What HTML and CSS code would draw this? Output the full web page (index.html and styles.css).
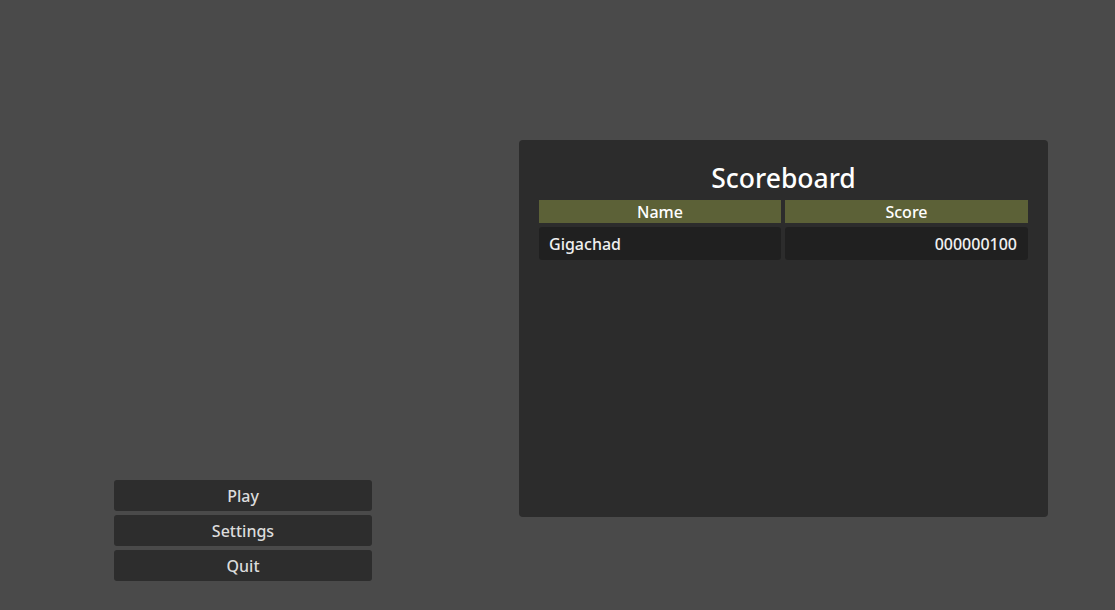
FILE: index.html
```html
<!DOCTYPE html>
<html>
<head>
<meta charset="utf-8">
<link rel="stylesheet" href="styles.css">
</head>
<body>
<div class="screen">
  <div class="menu">
    <div class="btn">Play</div>
    <div class="btn">Settings</div>
    <div class="btn">Quit</div>
  </div>
  <div class="panel">
    <div class="title">Scoreboard</div>
    <div class="table">
      <div class="head">Name</div>
      <div class="head">Score</div>
      <div class="cell name">Gigachad</div>
      <div class="cell score">000000100</div>
    </div>
  </div>
</div>
</body>
</html>
```
FILE: styles.css
```css
html, body {
  margin: 0;
  padding: 0;
  background: #4a4a4a;
}
.screen {
  width: 1115px;
  height: 610px;
  display: flex;
  align-items: flex-start;
  font-family: "Noto Sans", "Open Sans", sans-serif;
  font-weight: 500;
  font-size: 16px;
  color: #f0f0f0;
  overflow: hidden;
}
.menu {
  margin-left: 114px;
  margin-top: 480px;
  width: 258px;
  display: flex;
  flex-direction: column;
  gap: 4px;
}
.btn {
  box-sizing: border-box;
  height: 31px;
  padding-top: 2px;
  line-height: 29px;
  text-align: center;
  background: #2d2d2d;
  border-radius: 3px;
  color: #dcdcdc;
}
.panel {
  margin-left: 147px;
  margin-top: 140px;
  width: 489px;
  height: 359px;
  padding: 18px 20px 0;
  background: #2c2c2c;
  border-radius: 4px;
}
.title {
  height: 40px;
  line-height: 40px;
  font-size: 26.5px;
  text-align: center;
  color: #ffffff;
  margin-bottom: 2px;
}
.table {
  display: grid;
  grid-template-columns: 242px 243px;
  column-gap: 4px;
  row-gap: 4px;
}
.head {
  box-sizing: border-box;
  height: 23px;
  padding-top: 2px;
  line-height: 21px;
  text-align: center;
  background: #5c6137;
  color: #ffffff;
}
.cell {
  box-sizing: border-box;
  height: 33px;
  padding-top: 2px;
  line-height: 31px;
  background: #202020;
  border-radius: 3px;
  color: #f0f0f0;
}
.name {
  padding-left: 10px;
}
.score {
  text-align: right;
  padding-right: 11px;
}
```
